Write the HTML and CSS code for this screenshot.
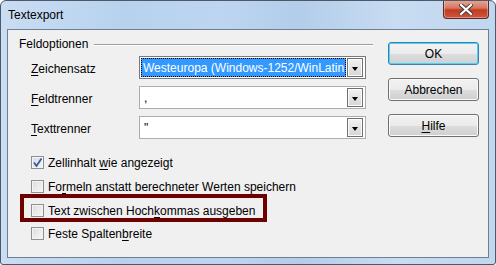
FILE: index.html
```html
<!DOCTYPE html>
<html lang="de">
<head>
  <meta charset="UTF-8" />
  <title>Textexport</title>
  <link rel="stylesheet" href="styles.css">
</head>
<body>

  <div class="window">
    <div class="titlebar">
      <span class="title">Textexport</span>
      <button class="close" aria-label="Schließen">
        <svg width="14" height="11" viewBox="0 0 14 11">
          <path d="M2 1 L12 10 M12 1 L2 10" stroke="#3a3a3a" stroke-width="4" stroke-linecap="square"/>
          <path d="M2 1 L12 10 M12 1 L2 10" stroke="#ffffff" stroke-width="2.2" stroke-linecap="square"/>
        </svg>
      </button>
    </div>

    <div class="frame">
      <div class="client">
        <!-- Feldoptionen -->
        <div class="options">
          <div class="group-head">
            <span>Feldoptionen</span>
            <span class="rule"></span>
          </div>

          <div class="field first">
            <label><u>Z</u>eichensatz</label>
            <div class="listbox focus">
              <span class="value selected">Westeuropa (Windows-1252/WinLatin 1)</span>
              <span class="dropdown"></span>
            </div>
          </div>
          <div class="field">
            <label><u>F</u>eldtrenner</label>
            <div class="listbox">
              <span class="value low">,</span>
              <span class="dropdown"></span>
            </div>
          </div>
          <div class="field">
            <label><u>T</u>exttrenner</label>
            <div class="listbox">
              <span class="value">"</span>
              <span class="dropdown"></span>
            </div>
          </div>

          <div class="checks">
            <div class="check">
              <span class="box checked"><svg width="11" height="11" viewBox="0 0 11 11"><path d="M2 5.5 L4.5 9 L9.5 1.5" fill="none" stroke="#3d56a0" stroke-width="1.8"/></svg></span>
              <span>Zellinhalt <u>w</u>ie angezeigt</span>
            </div>
            <div class="check">
              <span class="box"></span>
              <span>Fo<u>r</u>meln anstatt berechneter Werten speichern</span>
            </div>
            <div class="check marked">
              <span class="box"></span>
              <span>Text zwischen Hoch<u>k</u>ommas ausgeben</span>
            </div>
            <div class="check">
              <span class="box"></span>
              <span>Feste Spalten<u>b</u>reite</span>
            </div>
          </div>
        </div>

        <!-- Buttons -->
        <div class="buttons">
          <button class="btn default">OK</button>
          <button class="btn">Abbrechen</button>
          <button class="btn"><u>H</u>ilfe</button>
        </div>
      </div>
    </div>
  </div>

</body>
</html>
```

FILE: styles.css
```css
:root {
  --client: #f0f0f0;
  --text: #000;
  --field-border: #abadb3;
  --mark: #6f0000;
}

*, *::before, *::after {
  box-sizing: border-box;
}

body {
  margin: 0;
  width: 496px;
  height: 265px;
  overflow: hidden;
  background: #fff;
  font-family: "Liberation Sans", Arial, sans-serif;
  font-size: 12px;
  color: var(--text);
}

u {
  text-decoration: underline;
  text-underline-offset: 2px;
}

.window {
  width: 496px;
  height: 265px;
  border: 1px solid #4d5968;
  border-radius: 6px 6px 3px 3px;
  background: linear-gradient(to right, #c9ddf3, #b8d2ee 25%, #bdd5f0 45%, #b3cdea 60%, #c8dcf2 80%, #c0d7f0);
  display: flex;
  flex-direction: column;
  overflow: hidden;
}

.titlebar {
  height: 28px;
  display: flex;
  justify-content: space-between;
  align-items: flex-start;
  padding-left: 7px;
  padding-right: 6px;
}

.title {
  margin-top: 7px;
  font-size: 12px;
}

.close {
  width: 46px;
  height: 19px;
  margin-top: -1px;
  border: 1px solid #5a2a22;
  border-top: none;
  border-radius: 0 0 4px 4px;
  background: linear-gradient(#e7a998, #d7755f 45%, #c13c22 55%, #d0563b);
  box-shadow: inset 0 0 0 1px rgba(255, 255, 255, 0.35);
  display: flex;
  align-items: center;
  justify-content: center;
  padding: 0;
}

.frame {
  flex: 1;
  padding: 0 6px 6px 6px;
  display: flex;
}

.client {
  flex: 1;
  background: var(--client);
  border: 1px solid #6f7e90;
  display: flex;
  justify-content: space-between;
}

.options {
  width: 365px;
  padding: 6px 0 0 11px;
}

.group-head {
  display: flex;
  align-items: center;
  height: 16px;
}

.group-head .rule {
  flex: 1;
  margin-left: 6px;
  margin-top: 1px;
  border-top: 1px solid #a0a0a0;
  border-bottom: 1px solid #fff;
}

.field {
  display: flex;
  align-items: center;
  height: 23px;
  margin-top: 7px;
  padding-left: 12px;
}

.field.first {
  margin-top: 4px;
}

.field label {
  width: 108px;
  padding-top: 2px;
}

.listbox {
  width: 227px;
  height: 23px;
  background: #fff;
  border: 1px solid var(--field-border);
  display: flex;
  align-items: stretch;
  padding: 1px 2px 1px 1px;
}

.listbox.focus {
  border-color: #7a7a7a;
}

.listbox .value {
  flex: 1;
  min-width: 0;
  padding-left: 3px;
  display: flex;
  align-items: center;
  white-space: nowrap;
  overflow: hidden;
}

.listbox .value.low {
  align-items: flex-end;
  padding-bottom: 2px;
}

.listbox .value.selected {
  background: #3399ff;
  color: #fff;
  padding-left: 2px;
  outline: 1px dotted #000;
  outline-offset: -1px;
}

.dropdown {
  width: 16px;
  margin-left: 1px;
  border: 1px solid #707070;
  background: linear-gradient(#f2f2f2, #e4e4e4 50%, #d6d6d6);
  box-shadow: inset 0 0 0 1px #fcfcfc;
  position: relative;
}

.dropdown::after {
  content: "";
  position: absolute;
  left: 4px;
  top: 8px;
  border-left: 3.5px solid transparent;
  border-right: 3.5px solid transparent;
  border-top: 4px solid #000;
}

.checks {
  margin-top: 17px;
  padding-left: 12px;
}

.check {
  display: flex;
  align-items: center;
  height: 13px;
  margin-bottom: 11px;
  white-space: nowrap;
}

.check .box {
  width: 13px;
  height: 13px;
  margin-right: 4px;
  border: 1px solid #8e8f8f;
  background: linear-gradient(135deg, #dcdcdc, #f8f8f8);
  box-shadow: inset 0 0 0 1px #f4f4f4;
  display: flex;
  align-items: center;
  justify-content: center;
}

.check .box.checked {
  background: linear-gradient(135deg, #d6dae3, #f5f6f8);
}

.check.marked {
  position: relative;
  margin-top: 1px;
  margin-bottom: 10px;
}

/* annotation frame drawn over the dialog */
.check.marked::after {
  content: "";
  position: absolute;
  left: -11px;
  top: -10px;
  width: 247px;
  height: 28px;
  border: 4px solid var(--mark);
}

.buttons {
  display: flex;
  flex-direction: column;
  gap: 13px;
  padding: 12px 9px 0 0;
}

.btn {
  width: 91px;
  height: 23px;
  font-family: inherit;
  font-size: 12px;
  color: #000;
  border: 1px solid #707070;
  border-radius: 3px;
  background: linear-gradient(#f2f2f2, #ebebeb 50%, #dddddd 51%, #cfcfcf);
  box-shadow: inset 0 0 0 1px #fbfbfb;
  padding: 0;
}

.btn.default {
  border-color: #3c7fb1;
  box-shadow: inset 0 0 0 1px #48d4f7;
  background: linear-gradient(#f3f3f3, #ebebeb 50%, #dddddd 51%, #d0d0d0);
}
```
